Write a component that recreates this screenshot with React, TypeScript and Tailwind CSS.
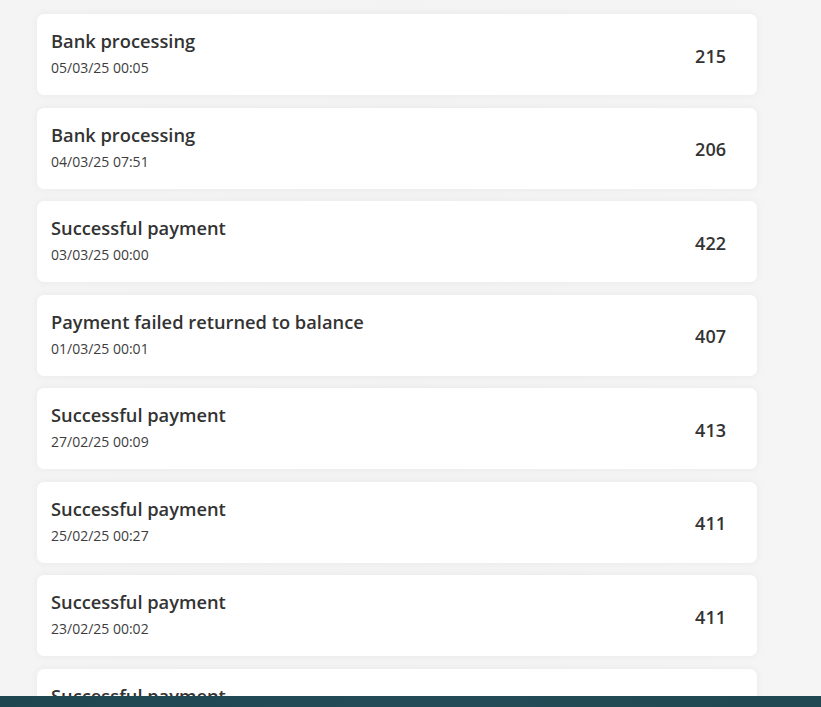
const rows = [
  { title: "Bank processing", date: "05/03/25 00:05", amount: "215" },
  { title: "Bank processing", date: "04/03/25 07:51", amount: "206" },
  { title: "Successful payment", date: "03/03/25 00:00", amount: "422" },
  { title: "Payment failed returned to balance", date: "01/03/25 00:01", amount: "407" },
  { title: "Successful payment", date: "27/02/25 00:09", amount: "413" },
  { title: "Successful payment", date: "25/02/25 00:27", amount: "411" },
  { title: "Successful payment", date: "23/02/25 00:02", amount: "411" },
  { title: "Successful payment", date: "21/02/25 00:04", amount: "409" },
];

function TransactionRow({ title, date, amount }: { title: string; date: string; amount: string }) {
  return (
    <div className="flex h-[81px] shrink-0 items-center justify-between rounded-[7px] bg-white pl-[14px] pr-[31px] shadow-[0_0_8px_rgba(0,0,0,0.05)]">
      <div className="flex h-full flex-col pt-[15px]">
        <span className="text-[18.3px] font-semibold leading-[24px] text-[#333333]">{title}</span>
        <span className="mt-[6px] text-[14px] leading-[18px] text-[#3d3d3d]">{date}</span>
      </div>
      <span className="mt-[3px] text-[18px] font-semibold text-[#333333]">{amount}</span>
    </div>
  );
}

export default function App() {
  return (
    <div
      className="relative flex h-[707px] w-[821px] flex-col overflow-hidden bg-gradient-to-r from-[#f4f4f4] via-[#f3f3f3] to-[#f5f5f5]"
      style={{ fontFamily: '"Open Sans", "Noto Sans", sans-serif' }}
    >
      <div className="flex flex-1 flex-col overflow-hidden pl-[37px] pt-[14px]">
        <div className="flex w-[720px] flex-col gap-[12.5px]">
          {rows.map((r, i) => (
            <TransactionRow key={i} {...r} />
          ))}
        </div>
      </div>
      <div className="h-[11px] shrink-0 bg-gradient-to-r from-[#1d4651] via-[#234b57] to-[#1f4852]" />
    </div>
  );
}
